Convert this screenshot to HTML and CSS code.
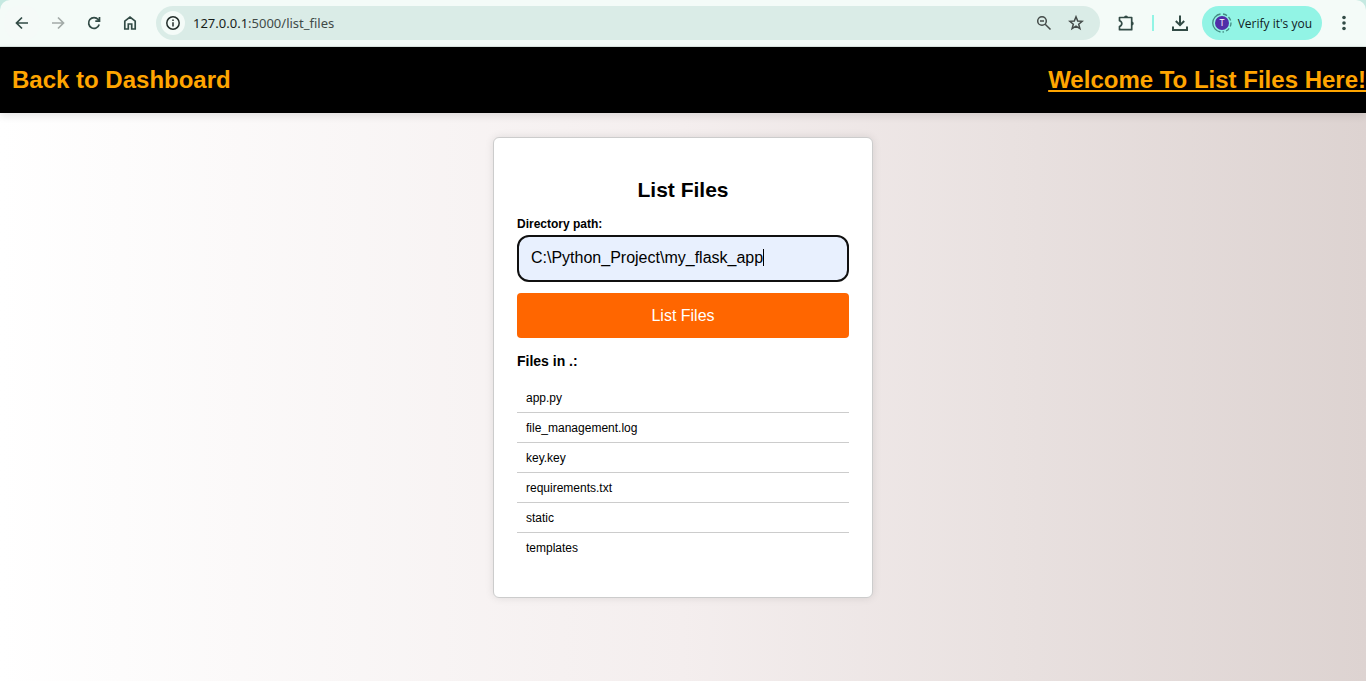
FILE: index.html
```
<!DOCTYPE html>
<html lang="en">
<head>
<meta charset="utf-8">
<title>List Files</title>
<link rel="stylesheet" href="styles.css">
</head>
<body>
<div class="browser">
  <div class="toolbar">
    <div class="nav-buttons">
      <button class="tool back" type="button" aria-label="Back"><svg viewBox="0 0 16 16" width="16" height="16"><path d="M14 8H3M8 2.500L2.500 8L8 13.500"/></svg></button>
      <button class="tool forward" type="button" aria-label="Forward"><svg viewBox="0 0 16 16" width="16" height="16"><path d="M2 8H13M8 2.500L13.500 8L8 13.500"/></svg></button>
      <button class="tool" type="button" aria-label="Reload"><svg viewBox="0 0 16 16" width="16" height="16"><path d="M13.200 9.500A5.400 5.400 0 1 1 12.200 4.500L13.200 5.800M13.500 2V6.200H9.300"/></svg></button>
      <button class="tool" type="button" aria-label="Home"><svg viewBox="0 0 16 16" width="16" height="16"><path d="M2.800 6.200L8 2L13.200 6.200V14H9.700V9H6.300V14H2.800Z"/></svg></button>
    </div>
    <div class="address">
      <button class="site-info" type="button" aria-label="View site information"><svg viewBox="0 0 16 16" width="16" height="16"><circle cx="8" cy="8" r="6.200"/><path d="M8 7.200V11.500M8 4.500V6"/></svg></button>
      <span class="url"><span class="host">127.0.0.1</span>:5000/list_files</span>
      <button class="tool address-tool" type="button" aria-label="Zoom"><svg viewBox="0 0 16 16" width="16" height="16"><circle cx="6" cy="6" r="4.300"/><path d="M9.200 9.200L14.500 14.500M4 6H8"/></svg></button>
      <button class="tool address-tool" type="button" aria-label="Bookmark this page"><svg viewBox="0 0 16 16" width="16" height="16"><path d="M8 1.800L9.700 6L14.200 6.300L10.700 9.200L11.900 13.700L8 11.200L4.100 13.700L5.300 9.200L1.800 6.300L6.300 6Z"/></svg></button>
    </div>
    <div class="actions">
      <button class="tool" type="button" aria-label="Extensions"><svg viewBox="0 0 18 18" width="18" height="18"><path d="M2.500 3.500H14.700V15.700H2.500V12.500C5.600 11.500 5.600 7.700 2.500 6.700Z" stroke-linejoin="round"/><path class="solid" d="M7 3.500A2 2 0 0 1 11 3.500ZM14.700 7.500A2 2 0 0 1 14.700 11.500Z"/></svg></button>
      <span class="divider"></span>
      <button class="tool" type="button" aria-label="Downloads"><svg class="download" viewBox="0 0 18 18" width="18" height="18"><path d="M9 1.500V11M4.800 7L9 11.200L13.200 7M2 12.500V16H16V12.500"/></svg></button>
      <button class="profile" type="button"><svg viewBox="0 0 20 20" width="20" height="20" aria-hidden="true"><circle class="avatar" cx="10" cy="10" r="7"/><path class="ring" d="M8.500 1A9.100 9.100 0 0 0 8.500 19M11 1A9 9 0 0 1 15 2.600M16.500 4A9 9 0 0 1 18.600 7.500M19 9.500A9 9 0 0 1 18.200 13.500M17.200 15.300A9 9 0 0 1 14 18M12 18.800L10.500 19"/><text x="10" y="13" text-anchor="middle">T</text></svg><span>Verify it's you</span></button>
      <button class="tool menu" type="button" aria-label="Menu"><svg viewBox="0 0 16 16" width="16" height="16"><circle class="solid" cx="8" cy="2.500" r="1.800"/><circle class="solid" cx="8" cy="8" r="1.800"/><circle class="solid" cx="8" cy="13.500" r="1.800"/></svg></button>
    </div>
  </div>
</div>
<div class="page">
  <header class="site-header">
    <a class="dashboard-link" href="#">Back to Dashboard</a>
    <a class="welcome" href="#">Welcome To List Files Here!</a>
  </header>
  <main class="card">
    <h1 class="title">List Files</h1>
    <form class="form">
      <label class="label" for="directory">Directory path:</label>
      <div class="field">
        <input class="path" id="directory" type="text" value="C:\Python_Project\my_flask_app">
        <span class="caret"></span>
      </div>
      <button class="submit" type="button">List Files</button>
    </form>
    <h2 class="subtitle">Files in .:</h2>
    <ul class="files">
      <li>app.py</li>
      <li>file_management.log</li>
      <li>key.key</li>
      <li>requirements.txt</li>
      <li>static</li>
      <li>templates</li>
    </ul>
  </main>
</div>
</body>
</html>
```
FILE: styles.css
```
* {
  box-sizing: border-box;
}

body {
  margin: 0;
  min-height: 100vh;
  display: flex;
  flex-direction: column;
  font-family: "Liberation Sans", Arial, sans-serif;
  font-size: 12px;
  color: #000;
}

button,
input {
  font: inherit;
}

.browser {
  background: #c5e9e1;
}

.toolbar {
  display: flex;
  align-items: center;
  height: 47px;
  padding: 0 4px;
  background: #f4fbf8;
  border-bottom: 1px solid #dae5e1;
  border-radius: 10px 10px 0 0;
  font-family: "Noto Sans", sans-serif;
}

.nav-buttons,
.actions {
  display: flex;
  align-items: center;
}

.tool,
.site-info {
  display: flex;
  align-items: center;
  justify-content: center;
  flex: none;
  width: 36px;
  height: 36px;
  padding: 0;
  border: 0;
  border-radius: 50%;
  background: none;
}

.tool svg,
.site-info svg {
  fill: none;
  stroke: #324b46;
  stroke-width: 1.7;
}

.tool .solid {
  fill: #324b46;
  stroke: none;
}

.back {
  background: #f5faf8;
}

.forward svg {
  stroke: #a2aba8;
}

.address {
  display: flex;
  flex: 1;
  align-items: center;
  height: 34px;
  margin-left: 8px;
  padding: 0 8px 0 5px;
  border-radius: 17px;
  background: #daece7;
}

.site-info {
  width: 24px;
  height: 24px;
  background: #f4fbf8;
}

.site-info svg {
  stroke: #222d2a;
  stroke-width: 1.5;
}

.url {
  flex: 1;
  margin-left: 8px;
  font-size: 13px;
  color: #414b48;
}

.host {
  color: #171d1b;
}

.address-tool {
  width: 32px;
  height: 32px;
}

.address-tool svg {
  stroke: #444b49;
  stroke-width: 1.5;
}

.actions {
  margin-left: 8px;
}

.divider {
  width: 2px;
  height: 16px;
  margin: 0 8px;
  background: #92f4e5;
}

.tool .download {
  stroke-width: 2;
}

.profile {
  display: flex;
  align-items: center;
  gap: 6px;
  height: 34px;
  margin-left: 4px;
  padding: 0 10px;
  border: 0;
  border-radius: 17px;
  background: #92f4e5;
  color: #10201d;
  font-family: "Open Sans", sans-serif;
  font-size: 12px;
}

.avatar {
  fill: #512da8;
}

.ring {
  fill: none;
  stroke: #438b82;
  stroke-width: 1.3;
}

.profile text {
  fill: #fff;
  font-size: 9px;
}

.menu {
  margin-left: 4px;
}

.page {
  flex: 1;
  padding-bottom: 24px;
  background: linear-gradient(to right, #fff, #f4eeee, #ddd3d1);
}

.site-header {
  display: flex;
  align-items: center;
  justify-content: space-between;
  height: 66px;
  padding-left: 12px;
  background: #000;
  box-shadow: 0 3px 8px rgba(0, 0, 0, 0.1);
  font-size: 24px;
  font-weight: bold;
}

.site-header a {
  color: #ffa500;
}

.dashboard-link {
  text-decoration: none;
}

.card {
  width: 380px;
  max-width: 100%;
  margin: 24px auto 0;
  padding: 39px 23px 34px;
  border: 1px solid #ccc;
  border-radius: 6px;
  background: #fff;
  box-shadow: 0 0 8px rgba(0, 0, 0, 0.1);
}

.title {
  margin: 0 0 14px;
  font-size: 21px;
  line-height: 26px;
  text-align: center;
}

.form {
  display: flex;
  flex-direction: column;
}

.label {
  margin-bottom: 4px;
  line-height: 14px;
  font-weight: bold;
}

.field {
  position: relative;
  display: flex;
}

.path {
  width: 100%;
  height: 47px;
  padding: 0 12px 2px;
  border: 2px solid #101010;
  border-radius: 12px;
  outline: 0;
  background: #e8f0fe;
  color: #000;
  font-size: 16px;
}

.caret {
  position: absolute;
  top: 14px;
  left: 246px;
  width: 1px;
  height: 17px;
  background: #000;
}

.submit {
  height: 45px;
  margin-top: 11px;
  border: 0;
  border-radius: 4px;
  background: #f60;
  color: #fff;
  font-size: 16px;
}

.subtitle {
  margin: 15px 0 14px;
  font-size: 14px;
  line-height: 16px;
}

.files {
  margin: 0;
  padding: 0;
  list-style: none;
}

.files li {
  padding: 8px 9px 7px;
  border-bottom: 1px solid #ccc;
  line-height: 14px;
}

.files li:last-child {
  padding-bottom: 8px;
  border-bottom: 0;
}
```
